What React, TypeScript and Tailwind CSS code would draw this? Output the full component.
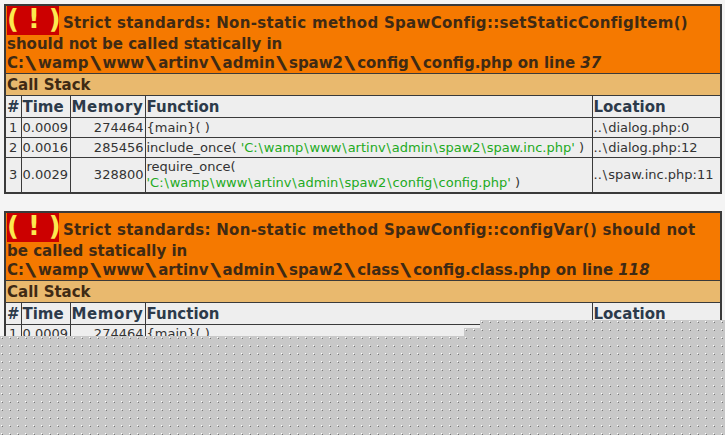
const thClass = 'border border-[#3a3a3a] bg-[#eeeeee] px-[1px] py-0 text-left text-[#2c3a4a] text-[15px] font-bold leading-[20px]';
const tdClass = 'h-[20px] border border-[#3a3a3a] bg-[#eeeeee] px-[1px] py-[1px] text-[13px] leading-[16px] text-[#333333]';
const cover = 'absolute right-0 bg-[#c8c8c8] bg-[radial-gradient(circle_at_1.5px_1.5px,#ffffff_0.7px,transparent_0.8px),radial-gradient(circle_at_2.5px_2.5px,#777777_0.7px,transparent_0.8px)] bg-[size:8px_8px]';

type Row = { n: number; time: string; mem: string; fn: React.ReactNode; loc: string };

// Verdana's backslash is much wider than DejaVu's, so stretch it and give it room
function Path({ value, gap }: { value: string; gap: string }) {
  const parts = value.split('\\');
  return (
    <>
      {parts.map((p, i) => (
        <span key={i}>
          {i > 0 && <span className={gap}>\</span>}
          {p}
        </span>
      ))}
    </>
  );
}

function Alert({ line1, line2, path, line, rows }: { line1: string; line2: string; path: string; line: number; rows: Row[] }) {
  return (
    <table className="w-[716px] table-fixed border-collapse border-2 border-[#3a3a3a] font-['DejaVu_Sans',sans-serif]">
      <colgroup>
        <col className="w-[16px]" />
        <col className="w-[49px]" />
        <col className="w-[75px]" />
        <col className="w-[447px]" />
        <col className="w-[129px]" />
      </colgroup>
      <tbody>
        <tr>
          <th colSpan={5} className="border border-[#3a3a3a] bg-[#f57900] px-[1px] py-0 text-left text-[15px] font-bold leading-[19px] text-[#3f2a14]">
            <span className="mr-[4px] inline-block h-[29px] w-[52px] bg-[#cc0000] text-center text-[26px] leading-[27px] text-[#fce94f] whitespace-pre">( ! )</span>
            <span className="tracking-[0.3px]">{line1}</span>
            <br />
            {line2}
            <br />
            <Path value={path} gap="mx-[4.3px] inline-block scale-x-[2] scale-y-[1.15]" /> on line <i>{line}</i>
          </th>
        </tr>
        <tr>
          <th colSpan={5} className="h-[22px] border border-[#3a3a3a] bg-[#e9b96e] px-[1px] py-0 text-left text-[15px] font-bold leading-[20px] text-[#3f2a14]">
            Call Stack
          </th>
        </tr>
        <tr className="h-[22px]">
          <th className={thClass + ' text-center'}>#</th>
          <th className={thClass}>Time</th>
          <th className={thClass}><span className="tracking-[0.6px]">Memory</span></th>
          <th className={thClass}>Function</th>
          <th className={thClass}>Location</th>
        </tr>
        {rows.map((r) => (
          <tr key={r.n}>
            <td className={tdClass + ' text-center'}>{r.n}</td>
            <td className={tdClass}>{r.time}</td>
            <td className={tdClass + ' text-right'}>{r.mem}</td>
            <td className={tdClass}>{r.fn}</td>
            <td className={tdClass + ' whitespace-nowrap overflow-hidden'}>
              <Path value={r.loc} gap="mx-[1px]" />
            </td>
          </tr>
        ))}
      </tbody>
    </table>
  );
}

const G = ({ value }: { value: string }) => (
  <span className="text-[#22aa22]">
    <Path value={value} gap="mx-[0.9px]" />
  </span>
);

export default function App() {
  return (
    <div className="relative h-[435px] w-[725px] overflow-hidden bg-[#f4f4f4] pl-[4px] pt-[4px]">
      <div className="flex flex-col gap-[17px]">
        <Alert
          line1="Strict standards: Non-static method SpawConfig::setStaticConfigItem()"
          line2="should not be called statically in"
          path="C:\wamp\www\artinv\admin\spaw2\config\config.php"
          line={37}
          rows={[
            { n: 1, time: '0.0009', mem: '274464', fn: '{main}( )', loc: '..\\dialog.php:0' },
            { n: 2, time: '0.0016', mem: '285456', fn: <>include_once( <G value="'C:\wamp\www\artinv\admin\spaw2\spaw.inc.php'" /> )</>, loc: '..\\dialog.php:12' },
            { n: 3, time: '0.0029', mem: '328800', fn: <>require_once(<br /><G value="'C:\wamp\www\artinv\admin\spaw2\config\config.php'" /> )</>, loc: '..\\spaw.inc.php:11' },
          ]}
        />
        <Alert
          line1="Strict standards: Non-static method SpawConfig::configVar() should not"
          line2="be called statically in"
          path="C:\wamp\www\artinv\admin\spaw2\class\config.class.php"
          line={118}
          rows={[{ n: 1, time: '0.0009', mem: '274464', fn: '{main}( )', loc: '..\\dialog.php:0' }]}
        />
      </div>
      {/* dithered cover over the bottom of the page */}
      <div className={cover + ' left-0 top-[336px] bottom-0'} />
      <div className={cover + ' left-[464px] top-[328px] h-[8px]'} />
      <div className={cover + ' left-[480px] top-[320px] h-[8px]'} />
    </div>
  );
}
